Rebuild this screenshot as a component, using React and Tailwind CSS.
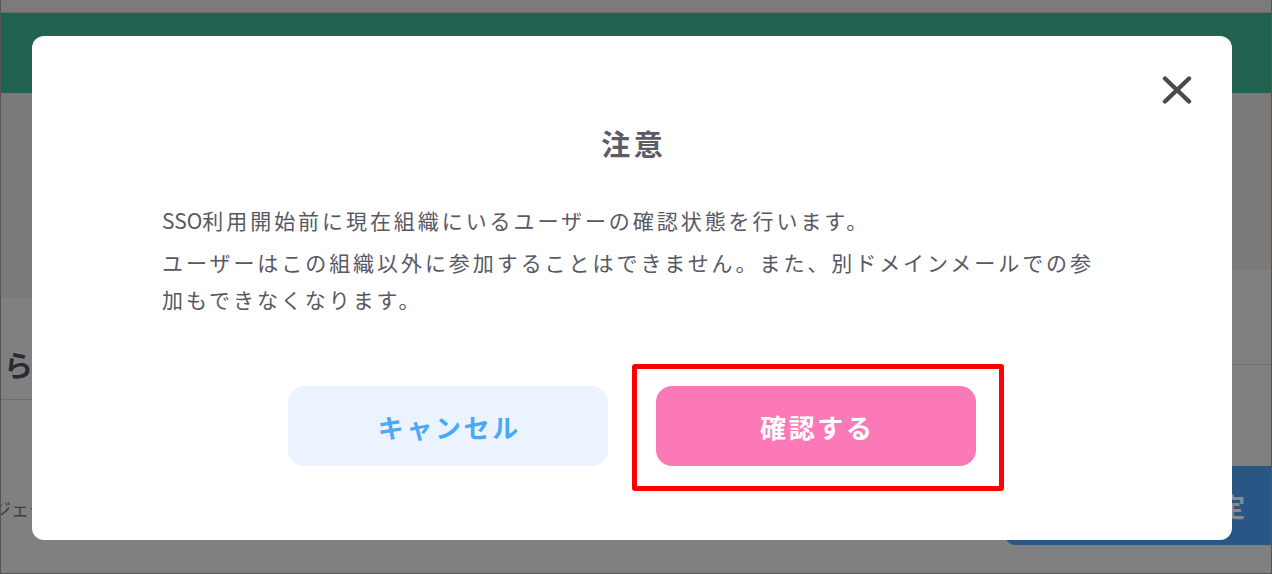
const jp = { fontFamily: '"Noto Sans CJK JP", "Noto Sans", sans-serif' };

function CloseIcon({ className }) {
  return (
    <svg viewBox="0 0 30 28" className={className} fill="none" stroke="currentColor" strokeWidth="4.4" strokeLinecap="round">
      <path d="M3 2.5L27 25.5" />
      <path d="M27 2.5L3 25.5" />
    </svg>
  );
}

function PageBehind() {
  // page under the dimmed overlay, colours already darkened
  return (
    <div className="flex h-full flex-col">
      <div className="h-[13px] border-b border-[#6a6a6a] bg-[#7b7b7b]" />
      <div className="h-[80px] bg-[#216350]" />
      <div className="flex flex-1">
        {/* left column */}
        <div className="flex w-[620px] flex-col">
          <div className="h-[205px] bg-[#7c7a78]" />
          <div className="flex h-[102px] items-center border-b border-[#6e6e6e] pl-[3px] pt-[30px]">
            <span className="text-[29px] font-bold leading-[34px] text-[#2a2a33]">らの参加設定</span>
          </div>
          <div className="mt-[96px] flex">
            <span className="-ml-[8px] text-[18px] leading-[24px] text-[#3e3e42]">ジェクト名</span>
          </div>
        </div>
        {/* right column */}
        <div className="flex flex-1 flex-col">
          <div className="h-[177px] bg-[#7c7a78]" />
          <div className="h-[95px] border-b border-[#707070]" />
          <div className="flex flex-1 flex-col justify-end pb-[28px]">
            <div className="ml-auto flex h-[79px] w-[267px] items-center justify-end rounded-l-[12px] bg-[#285785] pr-[26px]">
              <span className="text-[26px] font-bold text-[#8a8a8a]">設定</span>
            </div>
          </div>
        </div>
      </div>
    </div>
  );
}

export default function App() {
  return (
    <div
      className="relative h-[574px] w-full overflow-hidden border-b border-l border-r border-[#555555] bg-[#808080]"
      style={jp}
    >
      <PageBehind />

      {/* modal */}
      <div className="absolute left-[31px] top-[36px] flex h-[504px] w-[1200px] flex-col items-center rounded-[12px] bg-white pt-[90px]">
        <button
          type="button"
          className="absolute right-[40px] top-[40px] flex h-[28px] w-[30px] items-center justify-center text-[#4a4a4d]"
          aria-label="閉じる"
        >
          <CloseIcon className="h-[28px] w-[30px]" />
        </button>

        <h2 className="pl-[0.12em] text-[29px] font-bold leading-[34px] tracking-[0.12em] text-[#5c5c68]">注意</h2>

        <div className="mt-[42px] w-[940px] text-[21px] leading-[37px] tracking-[0.14em] text-[#585864]">
          <p>
            <span className="tracking-normal">SSO</span>利用開始前に現在組織にいるユーザーの確認状態を行います。
          </p>
          <p className="mt-[5px]">
            ユーザーはこの組織以外に参加することはできません。また、別ドメインメールでの参加もできなくなります。
          </p>
        </div>

        <div className="mt-[68px] flex gap-[48px]">
          <button
            type="button"
            className="flex h-[80px] w-[320px] items-center justify-center rounded-[16px] bg-[#ebf4fe] pl-[0.1em] text-[26px] font-bold tracking-[0.1em] text-[#4ba8f4]"
          >
            キャンセル
          </button>
          <button
            type="button"
            className="flex h-[80px] w-[320px] items-center justify-center rounded-[16px] bg-[#fc79b8] pl-[0.1em] text-[26px] font-bold tracking-[0.1em] text-white"
          >
            確認する
          </button>
        </div>

        {/* highlight annotation */}
        <div className="pointer-events-none absolute left-[600px] top-[328px] h-[127px] w-[372px] rounded-[3px] border-[5px] border-[#ff0000]" />
      </div>
    </div>
  );
}
